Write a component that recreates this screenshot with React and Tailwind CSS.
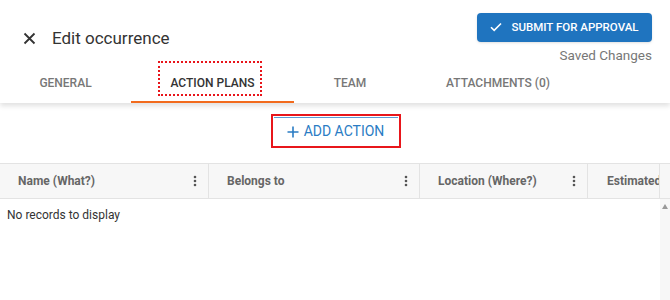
import React from "react";

const tabs = [
  { label: "GENERAL", w: "w-[131px]" },
  { label: "ACTION PLANS", w: "w-[163px]", active: true },
  { label: "TEAM", w: "w-[112px]" },
  { label: "ATTACHMENTS (0)", w: "w-[184px]" },
];

const columns = [
  { label: "Name (What?)", w: "w-[209px]" },
  { label: "Belongs to", w: "w-[211px]" },
  { label: "Location (Where?)", w: "w-[168px]" },
];

const Kebab = () => (
  <svg width="4" height="12" viewBox="0 0 4 12" className="shrink-0">
    <circle cx="2" cy="2" r="1.3" fill="#555" />
    <circle cx="2" cy="6" r="1.3" fill="#555" />
    <circle cx="2" cy="10" r="1.3" fill="#555" />
  </svg>
);

export default function App() {
  return (
    <div className="relative w-[670px] h-[300px] overflow-hidden bg-white font-['Roboto',sans-serif]">
      {/* header */}
      <div className="relative z-10 bg-white shadow-[0_3px_5px_rgba(0,0,0,0.12)]">
        <div className="flex justify-between h-[65px]">
          <div className="flex items-center gap-[16px] pl-[23px] pt-[12px]">
            <svg width="13" height="13" viewBox="0 0 13 13">
              <path d="M1.5 1.5 L11.5 11.5 M11.5 1.5 L1.5 11.5" stroke="#333" strokeWidth="1.8" />
            </svg>
            <span className="text-[17px] text-[#333]">Edit occurrence</span>
          </div>
          <div className="flex flex-col items-end pt-[13px] pr-[18px]">
            <button className="flex items-center justify-center gap-[9px] h-[30px] w-[175px] rounded-[4px] bg-[#1f74bf] text-white text-[11.5px] font-medium shadow-sm">
              <svg width="12" height="10" viewBox="0 0 12 10">
                <path d="M1 5.2 L4.2 8.4 L11 1.5" stroke="white" strokeWidth="1.6" fill="none" />
              </svg>
              SUBMIT FOR APPROVAL
            </button>
            <span className="mt-[3px] text-[13.5px] text-[#777]">Saved Changes</span>
          </div>
        </div>
        <div className="flex h-[38px]">
          {tabs.map((t) => (
            <div
              key={t.label}
              className={`${t.w} flex items-center justify-center text-[12px] font-medium border-b-2 ${
                t.active ? "text-[#333] border-[#f26b1d]" : "text-[#777] border-transparent"
              }`}
            >
              {t.label}
            </div>
          ))}
        </div>
        {/* annotation box around active tab */}
        <div className="absolute left-[158px] top-[61px] w-[104px] h-[35px] border-[2.5px] border-dotted border-[#e8141a]" />
      </div>

      {/* add action */}
      <div className="flex justify-center pt-[11px] pl-[1px]">
        <div className="border-2 border-[#e8161b] p-[1px]">
          <button className="flex items-center gap-[5px] h-[28px] w-[124px] justify-center border-t border-[#5b9bd5] text-[14px] text-[#2a7cc4]">
            <svg width="12" height="12" viewBox="0 0 12 12">
              <path d="M6 0.5 V11.5 M0.5 6 H11.5" stroke="#2a7cc4" strokeWidth="1.6" />
            </svg>
            ADD ACTION
          </button>
        </div>
      </div>

      {/* table */}
      <div className="mt-[15px]">
        <div className="flex h-[36px] bg-[#f7f7f7] border-y border-[#e3e3e3]">
          {columns.map((c) => (
            <div
              key={c.label}
              className={`${c.w} flex items-center justify-between pl-[18px] pr-[11px] border-r border-[#e3e3e3] text-[12px] font-bold text-[#666]`}
            >
              {c.label}
              <Kebab />
            </div>
          ))}
          <div className="w-[72px] flex items-center pl-[19px] border-r border-[#e3e3e3] text-[12px] font-bold text-[#666] overflow-hidden whitespace-nowrap">
            Estimated
          </div>
        </div>
        <div className="flex">
          <div className="flex-1 pl-[7px] pt-[7px] text-[12px] text-[#333]">No records to display</div>
          <div className="w-[10px] h-[110px] bg-[#f7f7f7] flex justify-center pt-[5px]">
            <svg width="6" height="5" viewBox="0 0 6 5">
              <path d="M0 5 L3 0 L6 5 Z" fill="#999" />
            </svg>
          </div>
        </div>
      </div>
    </div>
  );
}
